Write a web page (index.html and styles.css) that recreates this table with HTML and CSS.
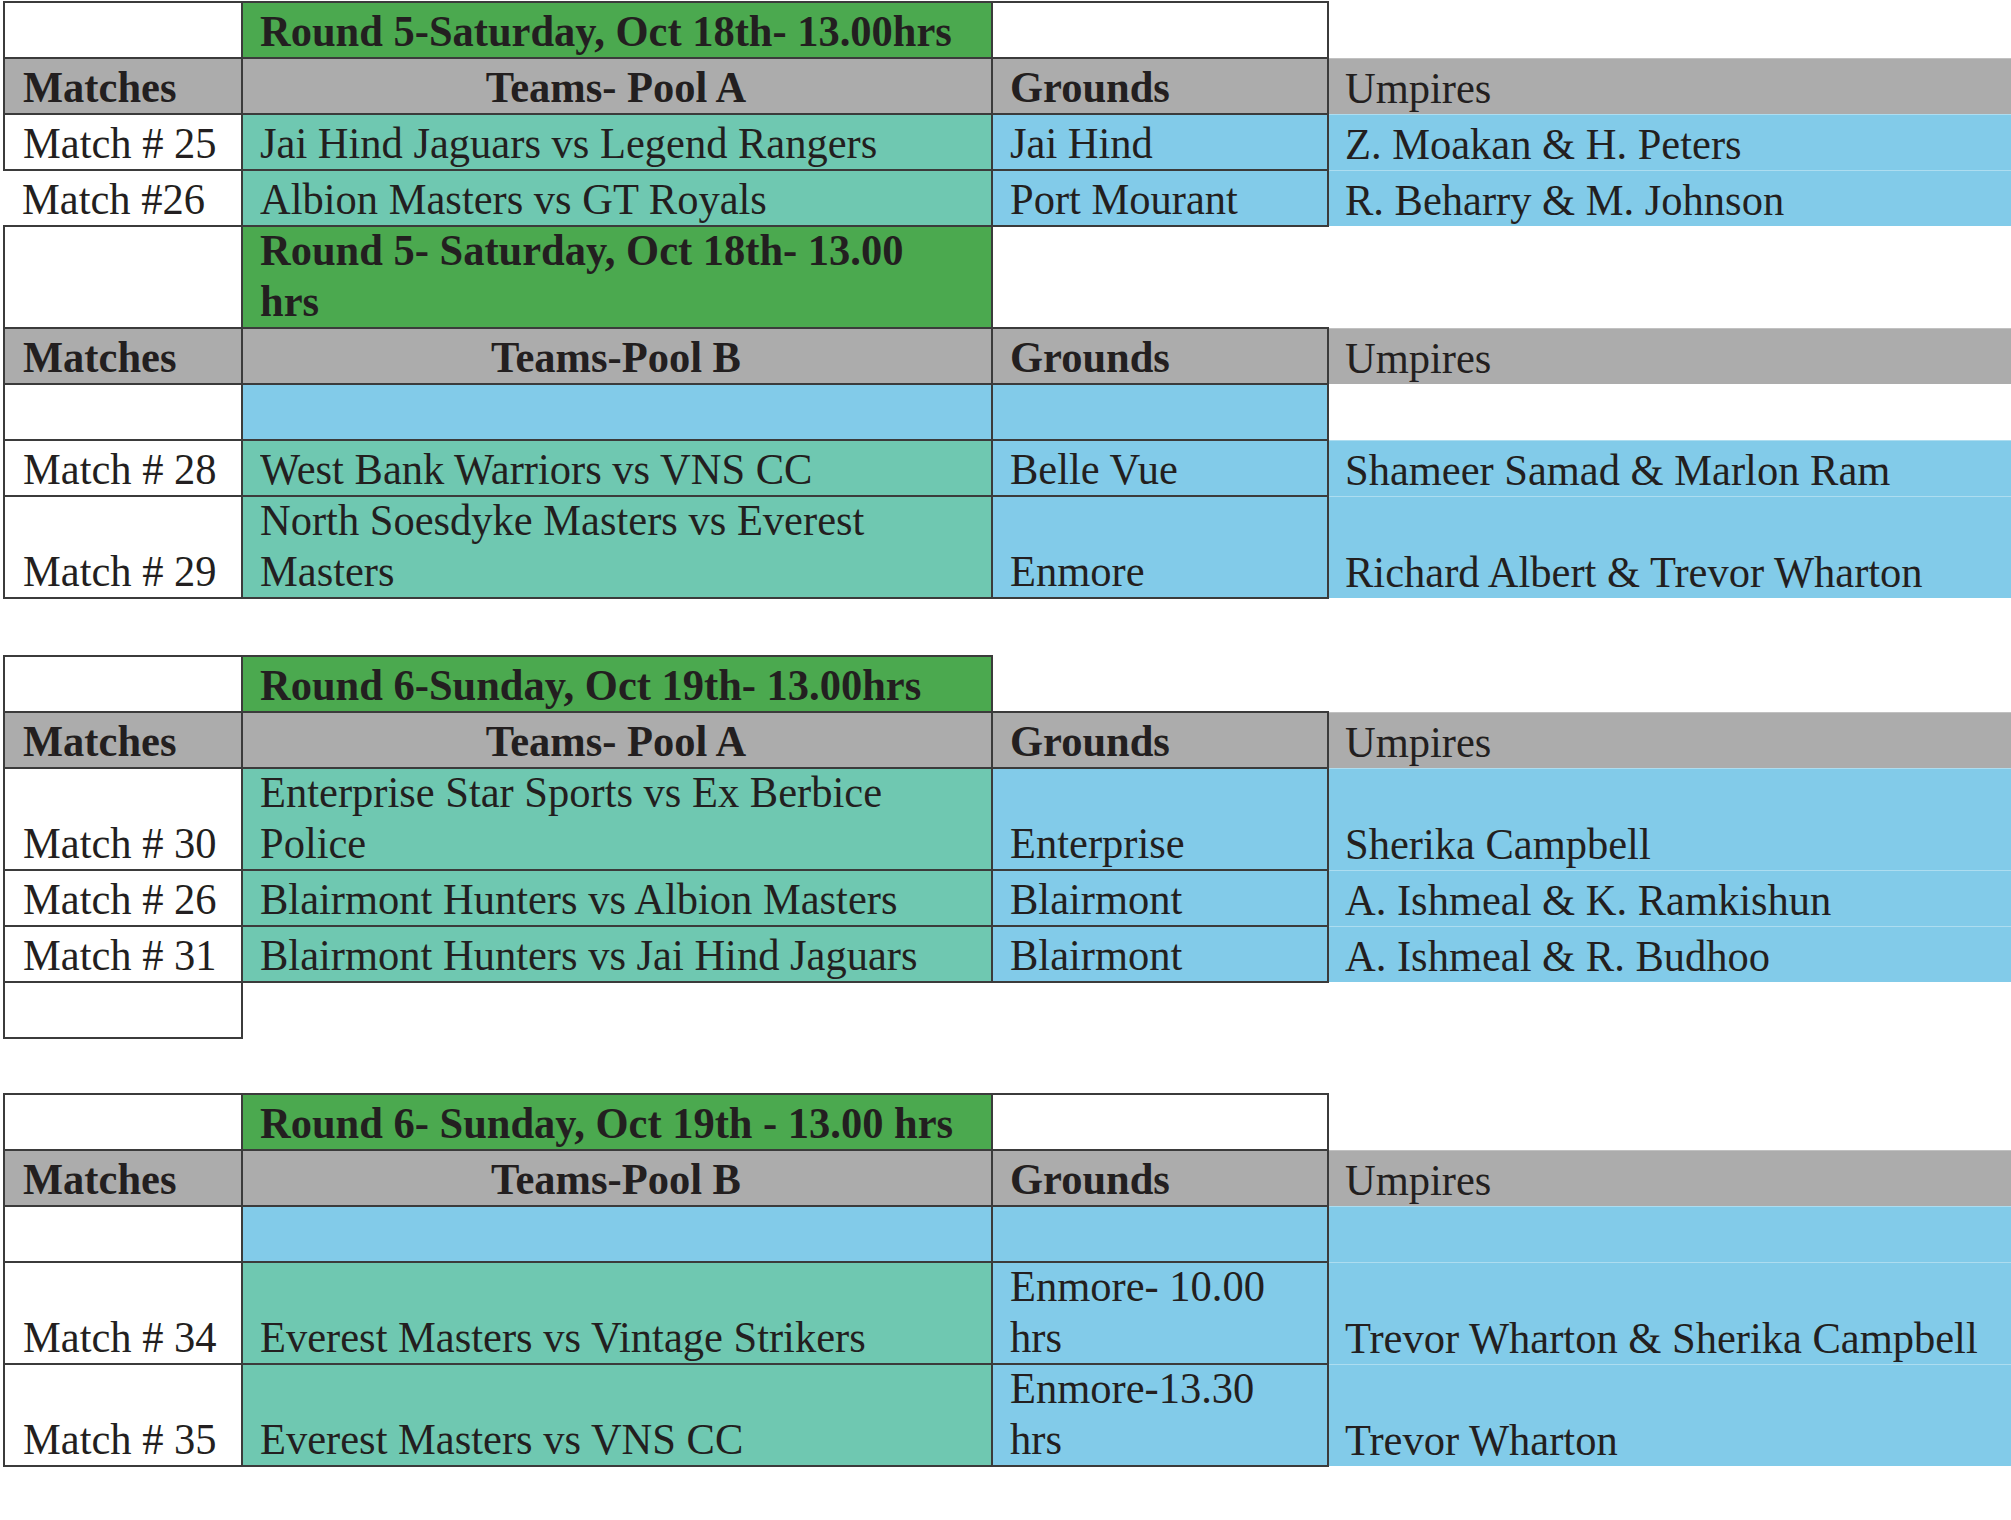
FILE: index.html
```html
<!DOCTYPE html>
<html lang="en">
<head>
<meta charset="utf-8">
<title>Fixtures</title>
<link rel="stylesheet" href="styles.css">
</head>
<body>
<table class="sched first">
  <colgroup><col class="w1"><col class="w2"><col class="w3"><col class="w4"></colgroup>
  <tr>
    <td class="c1 blank"></td>
    <td class="c2 title"><span class="t">Round 5-Saturday, Oct 18th- 13.00hrs</span></td>
    <td class="c3 blank"></td>
    <td class="c4 none"></td>
  </tr>
  <tr>
    <td class="c1 head"><span class="t">Matches</span></td>
    <td class="c2 head center"><span class="t">Teams- Pool A</span></td>
    <td class="c3 head"><span class="t">Grounds</span></td>
    <td class="c4 ump grey"><span class="t">Umpires</span></td>
  </tr>
  <tr>
    <td class="c1 blank"><span class="t">Match # 25</span></td>
    <td class="c2 team"><span class="t">Jai Hind Jaguars vs Legend Rangers</span></td>
    <td class="c3 ground"><span class="t">Jai Hind</span></td>
    <td class="c4 ump blue"><span class="t">Z. Moakan &amp; H. Peters</span></td>
  </tr>
  <tr>
    <td class="c1 blank noleft"><span class="t">Match #26</span></td>
    <td class="c2 team"><span class="t">Albion Masters vs GT Royals</span></td>
    <td class="c3 ground"><span class="t">Port Mourant</span></td>
    <td class="c4 ump blue"><span class="t">R. Beharry &amp; M. Johnson</span></td>
  </tr>
  <tr class="tall">
    <td class="c1 blank"></td>
    <td class="c2 title"><span class="t">Round 5- Saturday, Oct 18th- 13.00 hrs</span></td>
    <td class="c3 none"></td>
    <td class="c4 none"></td>
  </tr>
  <tr>
    <td class="c1 head"><span class="t">Matches</span></td>
    <td class="c2 head center"><span class="t">Teams-Pool B</span></td>
    <td class="c3 head"><span class="t">Grounds</span></td>
    <td class="c4 ump grey"><span class="t">Umpires</span></td>
  </tr>
  <tr>
    <td class="c1 blank"></td>
    <td class="c2 ground"></td>
    <td class="c3 ground"></td>
    <td class="c4 ump"></td>
  </tr>
  <tr>
    <td class="c1 blank"><span class="t">Match # 28</span></td>
    <td class="c2 team"><span class="t">West Bank Warriors vs VNS CC</span></td>
    <td class="c3 ground"><span class="t">Belle Vue</span></td>
    <td class="c4 ump blue"><span class="t">Shameer Samad &amp; Marlon Ram</span></td>
  </tr>
  <tr class="tall">
    <td class="c1 blank"><span class="t">Match # 29</span></td>
    <td class="c2 team"><span class="t">North Soesdyke Masters vs Everest Masters</span></td>
    <td class="c3 ground"><span class="t">Enmore</span></td>
    <td class="c4 ump blue"><span class="t">Richard Albert &amp; Trevor Wharton</span></td>
  </tr>
</table>

<table class="sched second">
  <colgroup><col class="w1"><col class="w2"><col class="w3"><col class="w4"></colgroup>
  <tr>
    <td class="c1 blank"></td>
    <td class="c2 title"><span class="t">Round 6-Sunday, Oct 19th- 13.00hrs</span></td>
    <td class="c3 none"></td>
    <td class="c4 none"></td>
  </tr>
  <tr>
    <td class="c1 head"><span class="t">Matches</span></td>
    <td class="c2 head center"><span class="t">Teams- Pool A</span></td>
    <td class="c3 head"><span class="t">Grounds</span></td>
    <td class="c4 ump grey"><span class="t">Umpires</span></td>
  </tr>
  <tr class="tall">
    <td class="c1 blank"><span class="t">Match # 30</span></td>
    <td class="c2 team"><span class="t">Enterprise Star Sports vs Ex Berbice Police</span></td>
    <td class="c3 ground"><span class="t">Enterprise</span></td>
    <td class="c4 ump blue"><span class="t">Sherika Campbell</span></td>
  </tr>
  <tr>
    <td class="c1 blank"><span class="t">Match # 26</span></td>
    <td class="c2 team"><span class="t">Blairmont Hunters vs Albion Masters</span></td>
    <td class="c3 ground"><span class="t">Blairmont</span></td>
    <td class="c4 ump blue"><span class="t">A. Ishmeal &amp; K. Ramkishun</span></td>
  </tr>
  <tr>
    <td class="c1 blank"><span class="t">Match # 31</span></td>
    <td class="c2 team"><span class="t">Blairmont Hunters vs Jai Hind Jaguars</span></td>
    <td class="c3 ground"><span class="t">Blairmont</span></td>
    <td class="c4 ump blue"><span class="t">A. Ishmeal &amp; R. Budhoo</span></td>
  </tr>
  <tr>
    <td class="c1 blank"></td>
    <td class="c2 none"></td>
    <td class="c3 none"></td>
    <td class="c4 none"></td>
  </tr>
</table>

<table class="sched third">
  <colgroup><col class="w1"><col class="w2"><col class="w3"><col class="w4"></colgroup>
  <tr>
    <td class="c1 blank"></td>
    <td class="c2 title"><span class="t">Round 6- Sunday, Oct 19th - 13.00 hrs</span></td>
    <td class="c3 blank"></td>
    <td class="c4 none"></td>
  </tr>
  <tr>
    <td class="c1 head"><span class="t">Matches</span></td>
    <td class="c2 head center"><span class="t">Teams-Pool B</span></td>
    <td class="c3 head"><span class="t">Grounds</span></td>
    <td class="c4 ump grey"><span class="t">Umpires</span></td>
  </tr>
  <tr>
    <td class="c1 blank"></td>
    <td class="c2 ground"></td>
    <td class="c3 ground"></td>
    <td class="c4 ump blue"></td>
  </tr>
  <tr class="tall">
    <td class="c1 blank"><span class="t">Match # 34</span></td>
    <td class="c2 team"><span class="t">Everest Masters vs Vintage Strikers</span></td>
    <td class="c3 ground"><span class="t">Enmore- 10.00 hrs</span></td>
    <td class="c4 ump blue"><span class="t">Trevor Wharton &amp; Sherika Campbell</span></td>
  </tr>
  <tr class="tall">
    <td class="c1 blank"><span class="t">Match # 35</span></td>
    <td class="c2 team"><span class="t">Everest Masters vs VNS CC</span></td>
    <td class="c3 ground"><span class="t">Enmore-13.30 hrs</span></td>
    <td class="c4 ump blue"><span class="t">Trevor Wharton</span></td>
  </tr>
</table>
</body>
</html>
```

FILE: styles.css
```css
html, body {
  margin: 0;
  padding: 0;
  background: #ffffff;
  overflow: hidden;
}

body {
  font-family: "Liberation Serif", "Times New Roman", serif;
  color: #231f20;
}

.sched {
  border-collapse: collapse;
  table-layout: fixed;
  width: 2008px;
  margin: 0 0 0 3px;
  font-size: 42.5px;
  line-height: 50px;
}

.sched.first { margin-top: 1px; }
.sched.second { margin-top: 56px; }
.sched.third { margin-top: 54px; }

.w1 { width: 238px; }
.w2 { width: 750px; }
.w3 { width: 336px; }
.w4 { width: 684px; }

.sched td {
  height: 54px;
  padding: 0;
  vertical-align: bottom;
  text-align: left;
  border: 2px solid #3b3b3b;
  overflow: hidden;
}

.sched tr.tall td {
  height: 100px;
}

.t {
  display: inline-block;
  line-height: 47.6px;
  transform: scaleY(1.06);
  transform-origin: 0 calc(100% - 9.2px);
}

.c1 { padding-left: 18px !important; padding-right: 8px !important; }
.c2 { padding-left: 17px !important; padding-right: 19px !important; }
.c3 { padding-left: 17px !important; padding-right: 18px !important; }
.c4 { padding-left: 16px !important; padding-right: 0 !important; }

.blank { background: #ffffff; }
.noleft { border-left: none !important; }

.sched td.none {
  border: none;
  background: transparent;
}

.title {
  background: #4ba94f;
  font-weight: bold;
}

.head {
  background: #acacac;
  font-weight: bold;
}

.center { text-align: center !important; }

.team { background: #6fc8b1; }
.ground { background: #82cbe9; }

.sched td.ump {
  border: none;
  font-weight: normal;
}

.ump.grey {
  background: #acacac;
  box-shadow: inset 0 1px 0 rgba(255, 255, 255, 0.25);
}

.ump.blue {
  background: #82cbe9;
  box-shadow: inset 0 1px 0 rgba(255, 255, 255, 0.35);
}
```
